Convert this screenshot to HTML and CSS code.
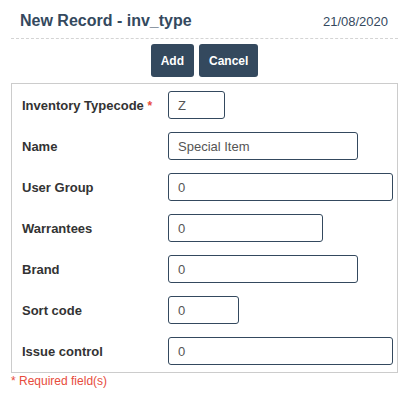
FILE: index.html
```html
<!DOCTYPE html>
<html lang="en">
    <head>
        <meta charset="UTF-8">
        <title>New Record - inv_type</title>
        <link rel="stylesheet" href="styles.css">
    </head>
    <body>
        <div id="registro">
            <div class="cabecera">
                <h2>New Record - inv_type</h2>
                <span class="fecha">21/08/2020</span>
            </div>
            <div class="botones">
                <button type="submit">Add</button>
                <button type="button">Cancel</button>
            </div>
            <form class="form-box" action="#" method="GET">
                <div class="form-row">
                    <label for="typecode">Inventory Typecode <span class="req">*</span></label>
                    <input type="text" id="typecode" value="Z" class="w-xs">
                </div>
                <div class="form-row">
                    <label for="name">Name</label>
                    <input type="text" id="name" value="Special Item" class="w-md">
                </div>
                <div class="form-row">
                    <label for="user_group">User Group</label>
                    <input type="text" id="user_group" value="0" class="w-lg">
                </div>
                <div class="form-row">
                    <label for="warrantees">Warrantees</label>
                    <input type="text" id="warrantees" value="0" class="w-sm">
                </div>
                <div class="form-row">
                    <label for="brand">Brand</label>
                    <input type="text" id="brand" value="0" class="w-md">
                </div>
                <div class="form-row">
                    <label for="sort_code">Sort code</label>
                    <input type="text" id="sort_code" value="0" class="w-xxs">
                </div>
                <div class="form-row">
                    <label for="issue_control">Issue control</label>
                    <input type="text" id="issue_control" value="0" class="w-lg">
                </div>
            </form>
            <div class="nota">* Required field(s)</div>
        </div>
    </body>
</html>
```

FILE: styles.css
```css
body {
    margin: 0;
    font-family: "Liberation Sans", Arial, sans-serif;
    background-color: #fff;
}
#registro {
    margin: 0 11px;
}
.cabecera {
    display: flex;
    justify-content: space-between;
    align-items: center;
    height: 34px;
    padding: 4px 10px 0 9px;
    border-bottom: 1px dashed #d4d4d4;
}
.cabecera h2 {
    margin: 0;
    font-size: 16px;
    color: #34495e;
}
.fecha {
    font-size: 13px;
    color: #34495e;
}
.botones {
    display: flex;
    justify-content: center;
    gap: 5px;
    margin-top: 5px;
}
.botones button {
    height: 33px;
    padding: 0 10px;
    background-color: #34495e;
    border: none;
    border-radius: 3px;
    color: #fff;
    font-family: inherit;
    font-size: 12px;
    font-weight: bold;
}
.form-box {
    margin-top: 6px;
    padding: 7px 4px 7px 10px;
    border: 1px solid #ccc;
    display: flex;
    flex-direction: column;
    gap: 13px;
}
.form-row {
    display: flex;
    align-items: center;
}
.form-row label {
    width: 146px;
    flex: none;
    font-size: 13px;
    font-weight: bold;
    color: #333;
}
.req {
    color: #e74c3c;
    font-size: 12px;
}
.form-row input {
    flex: none;
    box-sizing: border-box;
    height: 28px;
    padding: 0 9px;
    border: 1px solid #34495e;
    border-radius: 3px;
    font-family: inherit;
    font-size: 13px;
    color: #555;
}
.w-xxs { width: 71px; }
.w-xs { width: 57px; }
.w-sm { width: 155px; }
.w-md { width: 190px; }
.w-lg { width: 225px; }
.nota {
    margin-top: 1px;
    font-size: 12px;
    color: #e74c3c;
}
```
